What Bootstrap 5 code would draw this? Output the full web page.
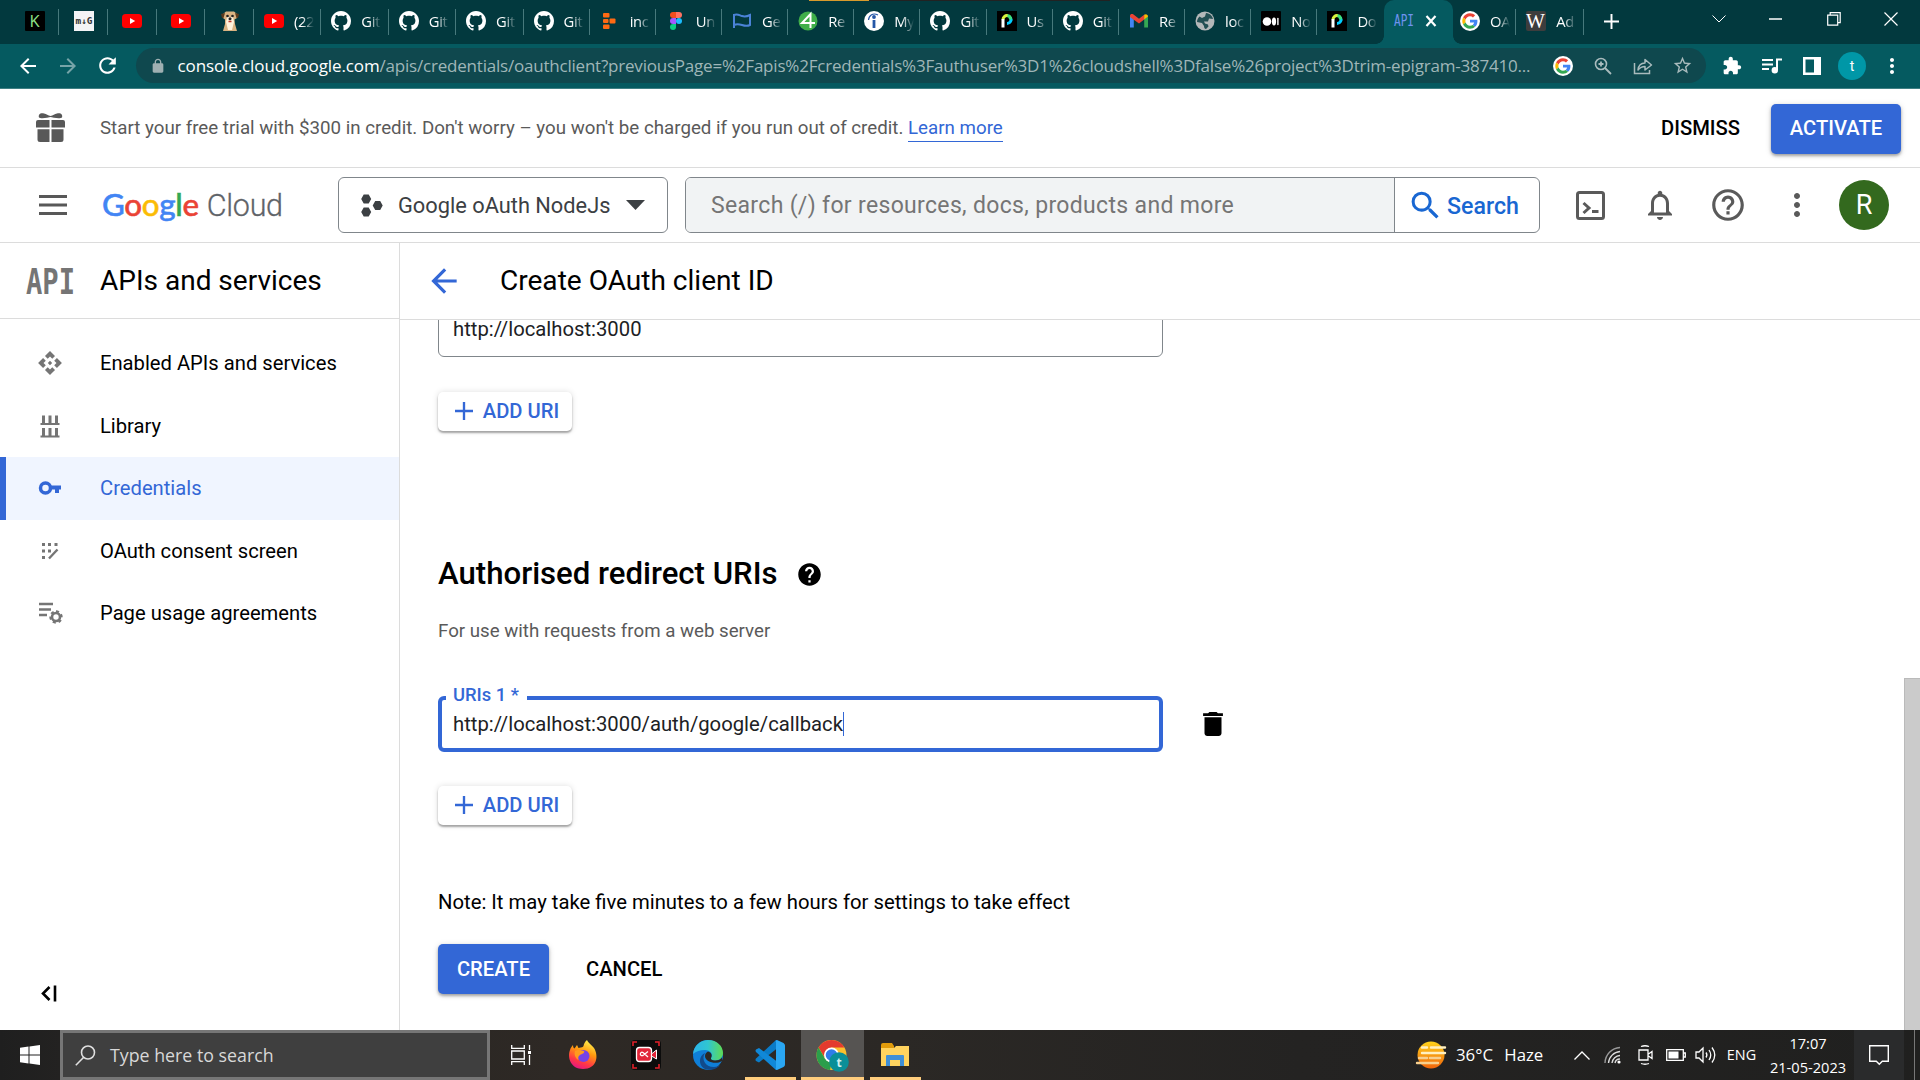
<!DOCTYPE html>
<html lang="en">
<head>
<meta charset="utf-8">
<title>Create OAuth client ID</title>
<link href="https://cdn.jsdelivr.net/npm/bootstrap@5.3.0/dist/css/bootstrap.min.css" rel="stylesheet">
<style>
:root{--blue:#3367d6;--rule:#dcdcdc;--ui:"Open Sans","Noto Sans",sans-serif}
body{font-family:Roboto,sans-serif;width:1920px;height:1080px;overflow:hidden;color:#000;background:#fff;line-height:1;white-space:nowrap}
svg{flex:none;display:block;overflow:visible}
/* browser chrome */
.tabstrip{height:43.5px;background:#02393e;font-family:var(--ui);font-size:14.8px;color:#fff;padding-left:10.5px;position:relative}
.media-line{left:809px;top:0;width:301px;height:1px;background:linear-gradient(90deg,#d89b2c 60px,#222 60px)}
.tb{height:43.5px;padding-bottom:1px;display:flex;align-items:center;position:relative;width:66.17px;padding-left:10px}
.tb::after{content:"";position:absolute;right:0;top:9px;width:1px;height:26px;background:#47797c}
.tb.pinned{width:48.7px;padding-left:14.5px}
.tb.wide{width:67.4px}
.tb.active-tab{background:#055a60;border-radius:10px 10px 0 0;width:69px;margin-right:-2.5px;padding-left:9px}
.tb.active-tab::after,.tb.nosep::after{display:none}
.foot{position:absolute;bottom:0;width:8px;height:8px}
.foot.l{left:-8px;background:radial-gradient(circle at 0 0,transparent 7.5px,#055a60 8px)}
.foot.r{right:-8px;background:radial-gradient(circle at 100% 0,transparent 7.5px,#055a60 8px)}
.tt{width:20px;overflow:hidden;margin-left:10px;letter-spacing:-.3px;line-height:22px;margin-top:-1px;-webkit-mask-image:linear-gradient(90deg,#000 8px,transparent 20px);mask-image:linear-gradient(90deg,#000 8px,transparent 20px)}
.winbtn{width:57.5px;height:37px}
.addr{height:45.5px;background:#055a60;border-bottom:1px solid #3f8084;padding:0 8px 0 7.5px;color:#fff}
.slot40{width:40px}
.omni{height:35px;border-radius:18px;background:#0f484e;width:1570px;padding:0 3px 0 14px;font-family:var(--ui);font-size:17px;color:#fff}
.omni .dom{letter-spacing:-.11px}
.omni .path{letter-spacing:-.21px;color:#9fb6b8}
.prof{width:28px;height:28px;border-radius:50%;background:#0097a7;font-size:14px}
/* trial banner */
.trial{height:79px;border-bottom:1px solid var(--rule);padding:1px 19px 0 36px;color:#5a5a5a;font-size:18.73px}
.trial a{color:var(--blue);text-decoration:none;border-bottom:1px solid var(--blue);padding-bottom:2px}
.gbtn{border:0;border-radius:5px;font-weight:500;font-size:20.2px;line-height:1;color:#000;background:none;padding:0;display:flex;align-items:center;justify-content:center}
.gbtn.fill{background:var(--blue);color:#fff;height:50px;box-shadow:0 2px 3px rgba(0,0,0,.3),0 1px 6px rgba(0,0,0,.15)}
.gbtn.raised{color:var(--blue);background:#fff;width:134px;height:38.5px;padding-left:4px;box-shadow:0 2px 2px rgba(0,0,0,.32),0 0 6px rgba(0,0,0,.13)}
/* console header */
.gbar{height:75px;border-bottom:1px solid var(--rule);padding:0 31px 0 39px;color:#5a5a5a}
.logo{font-size:31.3px;width:183px;letter-spacing:-.3px;margin-left:31px}
.logo .gg{font-family:Lato,sans-serif;font-weight:500;-webkit-text-stroke:.5px}
.logo .cl{font-family:Roboto,sans-serif;font-size:30.5px;color:#5f6368;font-weight:300;-webkit-text-stroke:.3px}
.proj{width:330px;height:56px;border:1px solid #80868b;border-radius:6px;color:#3c4043;font-size:21.8px;padding-left:22px}
.searchbox{width:855px;height:56px;border:1px solid #80868b;border-radius:6px;overflow:hidden}
.searchbox .ph{background:#f1f3f4;width:709px;border-right:1px solid #80868b;font-size:23px;letter-spacing:.33px;color:#757575;padding:1px 0 0 25px}
.searchbox .go{color:#1967d2;font-weight:500;font-size:23.2px;padding-left:12px}
.slot68{width:68.6px}
.userpic{width:50px;height:50px;border-radius:50%;background:#33691e;color:#fff;font-size:27px}
/* side navigation */
.side{width:400px;border-right:1px solid var(--rule)}
.side-head{height:76px;border-bottom:1px solid var(--rule);font-size:28px;padding-left:25px}
.api-mark{font-family:"DejaVu Sans Mono","Liberation Mono",monospace;font-weight:700;width:75px}
.api-mark text{font-size:35px}
.side-nav{padding-top:13px}
.item{height:62.5px;font-size:20.2px;padding-left:37px;color:#000}
.item svg{color:#757575;margin-right:37px}
.item.on{background:#f0f5ff;color:var(--blue);border-left:6px solid var(--blue);padding-left:31px}
.item.on svg{color:var(--blue)}
/* main column */
.main-head{height:77px;border-bottom:1px solid var(--rule);font-size:28.05px;padding-left:25px}
.scroller{overflow:hidden;padding-left:38px}
.uri{width:725px;height:56px;border:1px solid #80868b;border-radius:6px;font-size:20.27px;color:#202124;padding-left:14px;position:relative}
.uri.first{margin-top:-19px}
.uri.focus{border:4px solid var(--blue);padding-left:11px}
.uri label{position:absolute;left:4px;top:-15px;width:81px;padding-left:7px;background:#fff;color:var(--blue);font-weight:500;font-size:18.4px;line-height:20px}
.caret{width:1px;height:24px;background:var(--blue)}
.thumb{right:0;top:678px;width:16px;height:352px;background:#cbcbcb;border:1px solid #bababa;border-width:1px 0 0 1px}
/* taskbar */
.taskbar{height:50px;background:linear-gradient(90deg,#1f1f1f 0,#232221 60px,#2e2925 560px,#2b2825 900px,#242322 1300px,#20201f 1920px);color:#fff;font-family:var(--ui)}
.start{width:60px}
.tsearch{width:430px;height:50px;border:3px solid #767676;background:#3f3f3f;font-size:17.8px;color:#d8d8d8;padding:1px 0 0 12px}
.app{width:62.3px;height:50px;position:relative}
.app.run::after{content:"";position:absolute;bottom:0;left:6px;width:51px;height:3px;background:#ffcd7d}
.app.cur{background:#565452}
.app.cur::after{left:0;width:100%}
.clock{width:92px;font-size:14.6px;line-height:24px}
.notif{width:50px;height:50px;background:#2a2b2c}
.peek{width:16px;height:50px;padding-right:5px}
.peek i{width:1px;height:50px;background:#777}
.w30{width:30px}
</style>
<script src="https://cdn.jsdelivr.net/npm/bootstrap@5.3.0/dist/js/bootstrap.bundle.min.js"></script>
</head>
<body class="d-flex flex-column">
<svg width="0" height="0" class="position-absolute">
<symbol id="gh" viewBox="0 0 16 16"><path fill="#fff" d="M8 0C3.58 0 0 3.58 0 8c0 3.54 2.29 6.53 5.47 7.59.4.07.55-.17.55-.38 0-.19-.01-.82-.01-1.49-2.01.37-2.53-.49-2.69-.94-.09-.23-.48-.94-.82-1.13-.28-.15-.68-.52-.01-.53.63-.01 1.08.58 1.23.82.72 1.21 1.87.87 2.33.66.07-.52.28-.87.51-1.07-1.78-.2-3.64-.89-3.64-3.95 0-.87.31-1.59.82-2.15-.08-.2-.36-1.02.08-2.12 0 0 .67-.21 2.2.82.64-.18 1.32-.27 2-.27s1.36.09 2 .27c1.53-1.04 2.2-.82 2.2-.82.44 1.1.16 1.92.08 2.12.51.56.82 1.27.82 2.15 0 3.07-1.87 3.75-3.65 3.95.29.25.54.73.54 1.48 0 1.07-.01 1.93-.01 2.2 0 .21.15.46.55.38A8.01 8.01 0 0 0 16 8c0-4.42-3.58-8-8-8z"/></symbol>
<symbol id="yt" viewBox="0 0 20 20"><rect y="3" width="20" height="14" rx="3.5" fill="red"/><path fill="#fff" d="M8 7l5.2 3L8 13z"/></symbol>
<symbol id="gg" viewBox="-7 -7 62 62"><circle cx="24" cy="24" r="31" fill="#fff"/><path fill="#ea4335" d="M24 9.5c3.54 0 6.71 1.22 9.21 3.6l6.85-6.85C35.9 2.38 30.47 0 24 0 14.62 0 6.51 5.38 2.56 13.22l7.98 6.19C12.43 13.72 17.74 9.5 24 9.5z"/><path fill="#4285f4" d="M46.98 24.55c0-1.57-.15-3.09-.38-4.55H24v9.02h12.94c-.58 2.96-2.26 5.48-4.78 7.18l7.73 6c4.51-4.18 7.09-10.36 7.09-17.65z"/><path fill="#fbbc05" d="M10.53 28.59c-.48-1.45-.76-2.99-.76-4.59s.27-3.14.76-4.59l-7.98-6.19C.92 16.46 0 20.12 0 24c0 3.88.92 7.54 2.56 10.78l7.97-6.19z"/><path fill="#34a853" d="M24 48c6.48 0 11.93-2.13 15.89-5.81l-7.73-6c-2.15 1.45-4.92 2.3-8.16 2.3-6.26 0-11.57-4.22-13.47-9.91l-7.98 6.19C6.51 42.62 14.62 48 24 48z"/></symbol>
<symbol id="pp" viewBox="0 0 20 20"><rect width="20" height="20" fill="#000"/><path fill="none" stroke="#0cf" stroke-width="3" d="M10 12.5a4 4 0 0 0 3.5-6"/><path fill="none" stroke="#3fe07a" stroke-width="3" d="M13.6 8.5A4 4 0 0 0 10 4.6"/><path fill="none" stroke="#d8f23c" stroke-width="3" d="M10.5 4.6A4 4 0 0 0 6 8.5"/><path fill="none" stroke="#fff" stroke-width="3" d="M6 8v8.5"/></symbol>
<symbol id="plus" viewBox="0 0 20 20"><path stroke="currentColor" stroke-width="2.6" d="M10 0v20M0 10h20"/></symbol>
<symbol id="back" viewBox="0 0 24 24"><path fill="currentColor" d="M20 11H7.83l5.59-5.59L12 4l-8 8 8 8 1.41-1.41L7.83 13H20v-2z"/></symbol>
<symbol id="dots" viewBox="0 0 24 24"><path fill="currentColor" d="M12 8c1.1 0 2-.9 2-2s-.9-2-2-2-2 .9-2 2 .9 2 2 2zm0 2c-1.1 0-2 .9-2 2s.9 2 2 2 2-.9 2-2-.9-2-2-2zm0 6c-1.1 0-2 .9-2 2s.9 2 2 2 2-.9 2-2-.9-2-2-2z"/></symbol>
</svg>

<header>
<div class="tabstrip d-flex">
  <div class="media-line position-absolute"></div>
  <div class="tb pinned"><svg width="20" height="20"><rect width="20" height="20" rx="1" fill="#000"/><text x="4.5" y="16" font-size="16.5" fill="#8fe388" font-family="Open Sans">K</text></svg></div>
  <div class="tb pinned"><svg width="20" height="20"><rect width="20" height="20" fill="#f4f4f6"/><text x="1.5" y="13" font-size="8.5" font-weight="700" fill="#333" font-family="DejaVu Sans Mono" textLength="17" lengthAdjust="spacingAndGlyphs">m↓G</text></svg></div>
  <div class="tb pinned"><svg width="20" height="20"><use href="#yt"/></svg></div>
  <div class="tb pinned"><svg width="20" height="20"><use href="#yt"/></svg></div>
  <div class="tb pinned"><svg width="20" height="20"><path fill="#d9b382" d="M3 3l3-2.500h8L17 3v4l-2.500 1.500L15 13l2 7H3l2-7V8.500L3 7z"/><path fill="#5b3a1c" d="M1 3l4-1-1.500 5L2 7zM19 3l-4-1 1.500 5L18 7z"/><path fill="#fff3dc" d="M7 6h6l1 5-2 8H8l-2-8z"/><circle cx="7.500" cy="5" r="1.300" fill="#222"/><circle cx="12.500" cy="5" r="1.300" fill="#222"/><circle cx="10" cy="7.800" r="1.500" fill="#222"/><path stroke="#c0392b" stroke-width="1.500" d="M8.500 10.500h3"/></svg></div>
  <div class="tb wide"><svg width="20" height="20"><use href="#yt"/></svg><div class="tt">(22</div></div>
  <div class="tb wide"><svg width="20" height="20"><use href="#gh"/></svg><div class="tt">Git</div></div>
  <div class="tb wide"><svg width="20" height="20"><use href="#gh"/></svg><div class="tt">Git</div></div>
  <div class="tb wide"><svg width="20" height="20"><use href="#gh"/></svg><div class="tt">Git</div></div>
  <div class="tb"><svg width="20" height="20"><use href="#gh"/></svg><div class="tt">Git</div></div>
  <div class="tb"><svg width="20" height="20"><g fill="#ff6a13"><rect x="3" y="2" width="6.500" height="4.500" rx="1"/><rect x="9.500" y="7.500" width="6" height="5" rx="1"/><rect x="3" y="8" width="5.500" height="4" rx="1"/><rect x="3" y="13.500" width="6.500" height="4.500" rx="1"/></g></svg><div class="tt">inc</div></div>
  <div class="tb"><svg width="20" height="20"><path fill="#f24e1e" d="M10 1H7a3 3 0 0 0 0 6h3z"/><path fill="#ff7262" d="M10 1h3a3 3 0 0 1 0 6h-3z"/><path fill="#a259ff" d="M10 7H7a3 3 0 0 0 0 6h3z"/><circle cx="13" cy="10" r="3" fill="#1abcfe"/><path fill="#0acf83" d="M10 13H7a3 3 0 1 0 3 3z"/></svg><div class="tt">Un</div></div>
  <div class="tb"><svg width="20" height="20"><path fill="none" stroke="#4b83d8" stroke-width="2" d="M2 17V3M2 4c3-1.500 5 0 8 1s5 .5 8-1v10c-3 1.500-5 1-8 0s-5-1.500-8 0"/></svg><div class="tt">Ge</div></div>
  <div class="tb"><svg width="20" height="20"><circle cx="10" cy="10" r="9.500" fill="#3fae49"/><path fill="none" stroke="#fff" stroke-width="2" d="M12.500 17V3L4 12h13"/></svg><div class="tt">Re</div></div>
  <div class="tb"><svg width="20" height="20"><circle cx="10" cy="10" r="10" fill="#fff"/><circle cx="10" cy="6" r="1.900" fill="#2557a7"/><path stroke="#2557a7" stroke-width="2.800" d="M10 9v8"/><path fill="none" stroke="#2557a7" stroke-width="1.200" d="M4.500 9C5 4 9 1.500 14 4"/></svg><div class="tt">My</div></div>
  <div class="tb"><svg width="20" height="20"><use href="#gh"/></svg><div class="tt">Git</div></div>
  <div class="tb"><svg width="20" height="20"><use href="#pp"/></svg><div class="tt">Us</div></div>
  <div class="tb"><svg width="20" height="20"><use href="#gh"/></svg><div class="tt">Git</div></div>
  <div class="tb"><svg width="20" height="20"><path fill="#4285f4" d="M1 5v11.500h3.800V8z"/><path fill="#34a853" d="M19 5v11.500h-3.800V8z"/><path fill="#ea4335" d="M1 5c0-2 2-2.500 3.500-1.500L10 7.800l5.500-4.300v4.800L10 12.500 1 6z"/><path fill="#fbbc04" d="M15.200 3.700C17 2.500 19 3.500 19 5.500l-3.800 3z"/></svg><div class="tt">Re</div></div>
  <div class="tb"><svg width="20" height="20"><circle cx="10" cy="10" r="9.500" fill="#b4b8b9"/><path fill="#234f53" d="M11 2c4 .5 6.500 3 7 6l-4-.5-1 3H9l1 2 3 1 .5 2L11 18c-1.500 0-2-1.500-2-3l-2-3-5-1c0-2 1-4 2.500-5.500L7 7l3-1.500z"/></svg><div class="tt">loc</div></div>
  <div class="tb"><svg width="20" height="20"><rect width="20" height="20" rx="1" fill="#000"/><circle cx="6" cy="10.500" r="4.300" fill="#fff"/><ellipse cx="13" cy="10.500" rx="2.100" ry="4" fill="#fff"/><rect x="16.200" y="6.800" width="1.400" height="7.400" rx=".7" fill="#fff"/></svg><div class="tt">No</div></div>
  <div class="tb nosep"><svg width="20" height="20"><use href="#pp"/></svg><div class="tt">Do</div></div>
  <div class="tb active-tab"><i class="foot l"></i><i class="foot r"></i><svg width="22" height="20"><text x="1" y="15" textLength="20" lengthAdjust="spacingAndGlyphs" font-family="DejaVu Sans Mono" font-size="15" fill="#6f93f0">API</text></svg><svg style="margin-left:6px" width="20" height="20"><path stroke="#fff" stroke-width="2.200" d="M5.500 5l9 10M14.500 5l-9 10"/></svg></div>
  <div class="tb"><svg width="20" height="20"><use href="#gg"/></svg><div class="tt">OA</div></div>
  <div class="tb wide"><svg width="20" height="20"><rect width="20" height="20" rx="2" fill="#3d3d3d"/><text x="0" y="16.500" font-family="Liberation Serif" font-size="20" fill="#fff" textLength="20">W</text></svg><div class="tt">Ad</div></div>
  <div class="ms-3 d-flex align-items-center ps-1"><svg width="15" height="15" color="#fff"><use href="#plus"/></svg></div>
  <div class="d-flex ms-auto">
    <div class="winbtn d-flex align-items-center justify-content-center"><svg width="14" height="8"><path fill="none" stroke="#fff" d="M.5.5l6.500 6.500L13.500.5"/></svg></div>
    <div class="winbtn d-flex align-items-center justify-content-center"><svg width="14" height="2"><path stroke="#fff" stroke-width="1.500" d="M0 1h13"/></svg></div>
    <div class="winbtn d-flex align-items-center justify-content-center"><svg width="14" height="14"><path fill="none" stroke="#fff" stroke-width="1.200" d="M.7 3.200h10v10H.7zM3.200 3V.7h10v10H11"/></svg></div>
    <div class="winbtn d-flex align-items-center justify-content-center"><svg width="14" height="14"><path stroke="#fff" stroke-width="1.200" d="M.5.5l13 13M13.500.5l-13 13"/></svg></div>
  </div>
</div>
<div class="addr d-flex align-items-center">
  <div class="slot40 d-flex justify-content-center"><svg width="24" height="24"><use href="#back"/></svg></div>
  <div class="slot40 d-flex justify-content-center" style="opacity:.45"><svg width="24" height="24" transform="scale(-1 1)"><use href="#back"/></svg></div>
  <div class="slot40 d-flex justify-content-center"><svg width="25" height="25" viewBox="0 0 24 24"><path fill="#fff" d="M17.650 6.350C16.200 4.900 14.210 4 12 4c-4.420 0-7.990 3.580-7.990 8s3.570 8 7.990 8c3.730 0 6.840-2.550 7.730-6h-2.080c-.82 2.330-3.040 4-5.650 4-3.310 0-6-2.690-6-6s2.690-6 6-6c1.660 0 3.140.69 4.220 1.780L13 11h7V4l-2.350 2.350z"/></svg></div>
  <div class="omni d-flex align-items-center ms-2">
    <svg width="16" height="16" viewBox="0 0 24 24"><path fill="#9fb0b2" d="M18 8h-1V6c0-2.760-2.240-5-5-5S7 3.240 7 6v2H6c-1.100 0-2 .9-2 2v10c0 1.100.9 2 2 2h12c1.100 0 2-.9 2-2V10c0-1.100-.9-2-2-2zM9 6c0-1.660 1.340-3 3-3s3 1.340 3 3v2H9V6z"/></svg>
    <div class="ms-2 ps-1"><span class="dom">console.cloud.google.com</span><span class="path">/apis/credentials/oauthclient?previousPage=%2Fapis%2Fcredentials%3Fauthuser%3D1%26cloudshell%3Dfalse%26project%3Dtrim-epigram-387410...</span></div>
    <div class="d-flex ms-auto align-items-center">
      <div class="slot40 d-flex justify-content-center"><svg width="20" height="20"><use href="#gg"/></svg></div>
      <div class="slot40 d-flex justify-content-center"><svg width="18" height="18" fill="none" stroke="#a9bbbd" stroke-width="1.600"><circle cx="7" cy="7" r="5.500"/><path d="M11 11l6 6M4.500 7h5M7 4.500v5" stroke-width="1.800"/></svg></div>
      <div class="slot40 d-flex justify-content-center"><svg width="20" height="20" fill="none" stroke="#a9bbbd" stroke-width="1.500"><path d="M1.500 7v10.500h15V14"/><path d="M5 14c.5-4.500 3-7 7-7V3.500L18.500 9 12 14v-3.500c-3 0-5 1-7 3.500z" stroke-linejoin="round"/></svg></div>
      <div class="slot40 d-flex justify-content-center"><svg width="21" height="21" viewBox="0 0 24 24"><path fill="#a9bbbd" d="M22 9.240l-7.190-.62L12 2 9.190 8.630 2 9.240l5.460 4.730L5.820 21 12 17.270 18.180 21l-1.630-7.030L22 9.240zM12 15.400l-3.760 2.270 1-4.280-3.320-2.880 4.380-.38L12 6.100l1.710 4.040 4.380.38-3.320 2.880 1 4.280L12 15.400z"/></svg></div>
    </div>
  </div>
  <div class="d-flex ms-auto align-items-center">
    <div class="slot40 d-flex justify-content-center"><svg width="20" height="20" viewBox="0 0 24 24"><path fill="#fff" d="M20.500 11H19V7c0-1.100-.9-2-2-2h-4V3.500C13 2.120 11.880 1 10.500 1S8 2.120 8 3.500V5H4c-1.100 0-1.990.9-1.990 2v3.800H3.500c1.490 0 2.700 1.210 2.700 2.700s-1.210 2.700-2.700 2.700H2V20c0 1.100.9 2 2 2h3.800v-1.500c0-1.490 1.210-2.700 2.700-2.700 1.490 0 2.700 1.210 2.700 2.700V22H17c1.100 0 2-.9 2-2v-4h1.500c1.380 0 2.500-1.120 2.500-2.500S21.880 11 20.500 11z"/></svg></div>
    <div class="slot40 d-flex justify-content-center"><svg width="20" height="18" stroke="#fff" stroke-width="2" fill="none"><path d="M0 3h11M0 7.500h11M0 12h7M15 13V2.500h5"/><circle cx="12.800" cy="13.200" r="2.200" fill="#fff"/></svg></div>
    <div class="slot40 d-flex justify-content-center"><svg width="18" height="18"><path fill="#fff" fill-rule="evenodd" d="M0 0h18v18H0zM2.500 2.500v13h8.500v-13z"/></svg></div>
    <div class="slot40 d-flex justify-content-center"><div class="prof d-flex align-items-center justify-content-center">t</div></div>
    <div class="slot40 d-flex justify-content-center"><svg width="24" height="26"><use href="#dots"/></svg></div>
  </div>
</div>
</header>

<section class="trial d-flex align-items-center">
  <svg width="29" height="30" style="margin-top:-3px" fill="#585858"><path d="M3 5.500C2 3 4 .5 8 1.500c2.500.6 4 1.800 6.500 2.500 2.500-.7 4-1.900 6.500-2.500 4-1 6 1.500 5 4-1 1-5 .8-8 .3l-3.500-.9-3.500.9c-3 .5-7 .7-8-.3z"/><path d="M2 8h11.500v7.500H0V10q0-2 2-2zM15.500 8H27q2 0 2 2v5.500H15.500zM1.500 17.300h12V30H4q-2.500 0-2.500-2.500zM15.500 17.300h12v10.200q0 2.500-2.500 2.500h-9.500z"/></svg>
  <div style="margin-left:35px"><span>Start your free trial with $300 in credit. Don't worry – you won't be charged if you run out of credit.</span> <a href="#">Learn more</a></div>
  <div class="d-flex ms-auto align-items-center">
    <button class="gbtn" style="margin-right:31px">DISMISS</button>
    <button class="gbtn fill" style="width:130px">ACTIVATE</button>
  </div>
</section>

<nav class="gbar d-flex align-items-center">
  <svg width="28" height="20"><path stroke="#585858" stroke-width="3" d="M0 1.500h28M0 10h28M0 18.500h28"/></svg>
  <div class="logo d-flex align-items-baseline"><span class="gg ps-1"><span style="color:#4285f4">G</span><span style="color:#ea4335">o</span><span style="color:#fbbc04">o</span><span style="color:#4285f4">g</span><span style="color:#34a853">l</span><span style="color:#ea4335">e</span></span><span class="cl ps-2">Cloud</span></div>
  <div class="proj d-flex align-items-center" style="margin-left:57px">
    <svg width="22" height="23" fill="#3c4043"><path d="M2.700.5h5L10.200 5 7.700 9.500h-5L.2 5zM2.700 13.500h5l2.500 4.500-2.500 4.500h-5L.2 18zM14.200 7h5l2.500 4.500-2.500 4.500h-5l-2.500-4.500z"/></svg>
    <span style="margin-left:15px;padding-top:1px">Google oAuth NodeJs</span>
    <svg class="ms-3" width="19" height="10"><path fill="#3c4043" d="M0 0h19l-9.500 10z"/></svg>
  </div>
  <div class="searchbox d-flex" style="margin-left:17px">
    <div class="ph d-flex align-items-center">Search (/) for resources, docs, products and more</div>
    <div class="go d-flex align-items-center"><svg width="37" height="37" viewBox="0 0 24 24"><path fill="currentColor" d="M15.500 14h-.79l-.28-.27A6.471 6.471 0 0 0 16 9.500 6.500 6.500 0 1 0 9.500 16c1.610 0 3.090-.59 4.230-1.570l.27.28v.79l5 4.990L20.490 19l-4.990-5zm-6 0C7.010 14 5 11.990 5 9.500S7.010 5 9.500 5 14 7.010 14 9.500 11.990 14 9.500 14z"/></svg><span style="margin-left:3px;padding-top:3px">Search</span></div>
  </div>
  <div class="d-flex align-items-center ms-auto">
    <div class="slot68 d-flex justify-content-center"><svg width="29" height="29" fill="none" stroke="#5a5a5a" stroke-width="3"><rect x="1.500" y="1.500" width="26" height="26" rx="2"/><path d="M7.500 12l5.500 5-5.500 5M16 20.500h6.500"/></svg></div>
    <div class="slot68 d-flex justify-content-center"><svg width="36" height="36" viewBox="0 0 24 24"><path fill="#5a5a5a" d="M12 22c1.100 0 2-.9 2-2h-4c0 1.100.9 2 2 2zm6-6v-5c0-3.070-1.630-5.640-4.500-6.320V4c0-.83-.67-1.500-1.500-1.500s-1.500.67-1.500 1.500v.68C7.640 5.360 6 7.920 6 11v5l-2 2v1h16v-1l-2-2zm-2 1H8v-6c0-2.480 1.510-4.500 4-4.500s4 2.020 4 4.500v6z"/></svg></div>
    <div class="slot68 d-flex justify-content-center"><svg width="38" height="38" viewBox="0 0 24 24"><path fill="#5a5a5a" d="M11 18h2v-2h-2v2zm1-16C6.480 2 2 6.480 2 12s4.480 10 10 10 10-4.480 10-10S17.520 2 12 2zm0 18c-4.410 0-8-3.590-8-8s3.590-8 8-8 8 3.590 8 8-3.590 8-8 8zm0-14c-2.210 0-4 1.790-4 4h2c0-1.100.9-2 2-2s2 .9 2 2c0 2-3 1.750-3 5h2c0-2.250 3-2.500 3-5 0-2.210-1.790-4-4-4z"/></svg></div>
    <div class="slot68 d-flex justify-content-center"><svg width="36" height="36"><use href="#dots"/></svg></div>
    <div class="userpic d-flex align-items-center justify-content-center ms-2">R</div>
  </div>
</nav>

<div class="d-flex flex-grow-1" style="min-height:0">
  <aside class="side d-flex flex-column flex-shrink-0">
    <div class="side-head d-flex align-items-center">
      <div class="api-mark"><svg width="50" height="28"><text x="1" y="27" textLength="49" lengthAdjust="spacingAndGlyphs" fill="#757575">API</text></svg></div>APIs and services
    </div>
    <div class="side-nav">
      <div class="item d-flex align-items-center"><svg width="26" height="26" viewBox="0 0 24 24"><path fill="currentColor" d="M14 12l-2 2-2-2 2-2 2 2zm-2-6l2.120 2.120 2.500-2.500L12 1 7.380 5.620l2.500 2.500L12 6zm-6 6l2.120-2.120-2.500-2.500L1 12l4.620 4.620 2.500-2.500L6 12zm12 0l-2.120 2.120 2.500 2.500L23 12l-4.620-4.620-2.500 2.500L18 12zm-6 6l-2.120-2.120-2.500 2.500L12 23l4.620-4.620-2.500-2.500L12 18z"/></svg>Enabled APIs and services</div>
      <div class="item d-flex align-items-center"><svg width="26" height="26" stroke="currentColor" fill="none"><path stroke-width="3" d="M6.500 2.500v8M13 2.500v8M19.500 2.500v8M6.500 15v8M13 15v8M19.500 15v8"/><path stroke-width="2" d="M3.500 11h19M3.500 23.500h19"/></svg>Library</div>
      <div class="item on d-flex align-items-center"><svg width="26" height="26" fill="none" stroke="currentColor"><circle cx="8.500" cy="13" r="5" stroke-width="3.500"/><path stroke-width="4" d="M13.500 12.500H24M20 13v5"/></svg>Credentials</div>
      <div class="item d-flex align-items-center"><svg width="26" height="26" fill="currentColor"><path d="M5 5h3v3H5zM11 5h3v3h-3zM17.500 5h3v3h-3zM5 11.500h3v3H5zM11 11.500h3v3h-3zM5 18h3v3H5z"/><path stroke="currentColor" stroke-width="2.400" d="M12 20.500l8.500-9"/></svg>OAuth consent screen</div>
      <div class="item d-flex align-items-center"><svg width="26" height="26" stroke="currentColor" fill="none"><path stroke-width="2.300" d="M2 4h14M2 9.500h12M2 15h8"/><circle cx="19" cy="17" r="4" stroke-width="2.600"/><path stroke-width="2.400" stroke-dasharray="3 2.760" d="M19 11.500a5.500 5.500 0 1 1-.01 0"/></svg>Page usage agreements</div>
    </div>
    <div class="mt-auto" style="padding:0 0 28px 41px"><svg width="17" height="17" fill="none" stroke="#000" stroke-width="2.600"><path d="M8.500 2L2 8.500 8.500 15M14 .5v16"/></svg></div>
  </aside>
  <main class="flex-grow-1 d-flex flex-column">
    <div class="main-head d-flex align-items-center"><svg width="38" height="38" color="#3367d6"><use href="#back"/></svg><span style="margin-left:37px">Create OAuth client ID</span></div>
    <div class="scroller flex-grow-1">
      <div class="uri first d-flex align-items-center">http://localhost:3000</div>
      <button class="gbtn raised" style="margin-top:35px"><svg width="18" height="18"><use href="#plus"/></svg><span style="margin-left:10px">ADD URI</span></button>
      <div class="d-flex align-items-center" style="margin-top:122.5px;height:42px"><span style="font-size:31.15px;font-weight:500">Authorised redirect URIs</span><svg style="margin-left:18.5px" width="27" height="27" viewBox="0 0 24 24"><path d="M12 2C6.480 2 2 6.480 2 12s4.480 10 10 10 10-4.480 10-10S17.520 2 12 2zm1 17h-2v-2h2v2zm2.070-7.750l-.9.920C13.450 12.900 13 13.500 13 15h-2v-.5c0-1.100.45-2.100 1.170-2.830l1.240-1.260c.37-.36.59-.86.59-1.410 0-1.100-.9-2-2-2s-2 .9-2 2H8c0-2.210 1.790-4 4-4s4 1.790 4 4c0 .88-.36 1.680-.93 2.250z"/></svg></div>
      <div style="margin-top:26px;height:20px;line-height:20px;font-size:18.7px;color:#5a5a5a">For use with requests from a web server</div>
      <div class="d-flex align-items-center" style="margin-top:55px">
        <div class="uri focus d-flex align-items-center"><label>URIs 1 *</label>http://localhost:3000/auth/google/callback<div class="caret"></div></div>
        <svg style="margin-left:33px" width="34" height="32" viewBox="0 0 24 24" preserveAspectRatio="none"><path d="M6 19c0 1.100.9 2 2 2h8c1.100 0 2-.9 2-2V7H6v12zM19 4h-3.500l-1-1h-5l-1 1H5v2h14V4z"/></svg>
      </div>
      <button class="gbtn raised" style="margin-top:34px"><svg width="18" height="18"><use href="#plus"/></svg><span style="margin-left:10px">ADD URI</span></button>
      <div style="margin-top:66px;height:22px;line-height:22px;font-size:20.27px">Note: It may take five minutes to a few hours for settings to take effect</div>
      <div class="d-flex align-items-center" style="margin-top:31.5px">
        <button class="gbtn fill" style="width:111px">CREATE</button>
        <button class="gbtn" style="margin-left:37px">CANCEL</button>
      </div>
    </div>
  </main>
</div>
<div class="thumb position-absolute"></div>

<footer class="taskbar d-flex align-items-center flex-shrink-0">
  <div class="start d-flex justify-content-center"><svg width="20" height="20" fill="#fff"><path d="M0 2.800l8.500-1.200v8H0zM9.500 1.400L20 0v9.500H9.500zM0 10.500h8.500v8L0 17.300zM9.500 10.500H20V20L9.500 18.600z"/></svg></div>
  <div class="tsearch d-flex align-items-center"><svg width="21" height="21" fill="none" stroke="#e0e0e0" stroke-width="1.600"><circle cx="13" cy="7.500" r="6.500"/><path d="M8.500 12.500L.8 20.200"/></svg><span style="margin-left:14px">Type here to search</span></div>
  <div class="app d-flex align-items-center justify-content-center"><svg width="20" height="20" fill="none" stroke="#fff" stroke-width="1.300"><path d="M.7 0v3.300h12.600V0M.7 6h12.600v8H.7zM.7 20v-3.300h12.600V20M18.500 0v5M18.500 10v10"/><path fill="#fff" stroke="none" d="M17 6h3v3h-3z"/></svg></div>
  <div class="app d-flex align-items-center justify-content-center"><svg width="30" height="30" viewBox="0 0 30 30"><defs><linearGradient id="ff" x1=".7" y1="0" x2=".3" y2="1"><stop offset="0" stop-color="#fff44f"/><stop offset=".4" stop-color="#ff980e"/><stop offset=".75" stop-color="#ff3647"/><stop offset="1" stop-color="#e31587"/></linearGradient></defs><path fill="url(#ff)" d="M19 0c1 3 5 5 7 8 5 8 3 21-11 21C3 29-1 18 2 10c.5-2 2-4 3-5 0 2 .5 3 1.500 3.500L9 5l1.500 3C14 7.500 15 7 15.500 6 16 3.500 17 1.500 19 0z"/><circle cx="15.500" cy="16" r="6" fill="#7542e5"/><path fill="#ff9a1e" d="M7 11c4-2 6 0 9 0 1 2-2 3-4 4-2 1-2 3-1.500 5C7 18 6 14 7 11z"/></svg></div>
  <div class="app d-flex align-items-center justify-content-center"><svg width="30" height="30"><rect width="30" height="30" rx="4" fill="#0c0c0c"/><path fill="none" stroke="#e0202a" stroke-width="1.600" d="M2 6V2h4M24 2h4v4M28 24v4h-4M6 28H2v-4"/><rect x="5.500" y="7.500" width="15" height="14" rx="3" fill="#e2263a" stroke="#fff" stroke-width="1.300"/><path fill="#e2263a" stroke="#fff" d="M20.500 14l5-4v9l-5-3z"/><path fill="none" stroke="#fff" stroke-width="1.300" d="M17 17l-5-4.500c-3-1.500-4 4 0 3l5-4"/></svg></div>
  <div class="app d-flex align-items-center justify-content-center"><svg width="30" height="30"><defs><linearGradient id="e1" x1="0" x2="1"><stop offset="0" stop-color="#2bb3ea"/><stop offset=".5" stop-color="#30c6d0"/><stop offset="1" stop-color="#5fdc52"/></linearGradient></defs><circle cx="15" cy="15" r="15" fill="#0f7fd8"/><path fill="#114a8b" d="M12 13c-4 6 0 14 9 14 3 0 5-1 6.500-2.500C24 30 16 31 11 28.500c-6-4-5-13 1-15.500z"/><path fill="url(#e1)" d="M0 14C1 5 8 0 15 0c9 0 15 6 15 13 0 5-4 7.500-8 7.500-3 0-5-1-4-2.500 3-4-1-8-6-8-5 .2-9 1-12 4z"/><path fill="#2b2825" d="M29 21c-6 4-17 1-17-5 0-2 1.500-4 3-4.500 3.500 1 4.500 4 3 6.500-.5 1.500 1 2.500 4 2.500 3 0 5-.6 7-3z"/></svg></div>
  <div class="app run d-flex align-items-center justify-content-center"><svg width="30" height="30"><path fill="#0a7bc7" d="M22 0v8.500L4 22.500l-3-1.500q-1-1.500 0-2.500L21 0z"/><path fill="#1088d8" d="M22 30v-8.500L4 8 1 9.500q-1 1.300 0 2.500l20 18z"/><path fill="#2aa7f3" d="M22 0l6.500 3q1.500 1 1.500 2.500v19q0 1.500-1.500 2.500L22 30l-1.500-1 .5-1V2l-.5-1z"/></svg></div>
  <div class="app run cur d-flex align-items-center justify-content-center"><svg width="33" height="33"><circle cx="15.500" cy="16" r="15" fill="#fbc02d"/><path fill="#e33b2e" d="M2.500 8.500a15 15 0 0 1 26 0H15.500L9 19z"/><path fill="#2b9e4b" d="M2.500 8.500l6.500 11 6.500 4L14 31A15 15 0 0 1 2.500 8.500z"/><circle cx="15.500" cy="16" r="7.500" fill="#fff"/><circle cx="15.500" cy="16" r="5.800" fill="#2f7de9"/><circle cx="23" cy="23" r="9.800" fill="#0a8f98"/><text x="20.500" y="27.500" font-family="Open Sans" font-size="12" font-weight="700" fill="#cfeff0">t</text></svg></div>
  <div class="app run d-flex align-items-center justify-content-center"><svg width="28" height="24"><path fill="#e09b0b" d="M0 2q0-2 2-2h9l2 3v6H0z"/><path fill="#ffd35e" d="M0 5h13l2-2h13v20H0z"/><path fill="#3f8fd6" d="M5 13q0-1 1-1h16q1 0 1 1v10h-4v-6H9v6H5z"/></svg></div>

  <div class="d-flex align-items-center ms-auto">
    <svg width="30" height="28"><defs><linearGradient id="sun" x2="0" y2="1"><stop offset="0" stop-color="#ffd21a"/><stop offset="1" stop-color="#f0640a"/></linearGradient></defs><circle cx="15" cy="14" r="13.500" fill="url(#sun)"/><g stroke-width="2.400" stroke-linecap="round"><path stroke="#fff0c0" d="M6 6.500h5M15 6.500h14M6 12h23"/><path stroke="#f7cf8e" d="M3 17h8M14 17h10M1 22h21"/></g></svg>
    <span style="font-size:16.8px;margin-left:10px;width:111px;word-spacing:7px;padding-top:1px">36°C Haze</span>
    <div class="w30 d-flex justify-content-center"><svg width="16" height="9"><path fill="none" stroke="#fff" stroke-width="1.300" d="M.5 8.500L8 1l7.500 7.500"/></svg></div>
    <div class="w30 d-flex justify-content-center"><svg width="17" height="18" fill="none" stroke-width="1.400"><path stroke="#999" d="M1 17A16 16 0 0 1 16 1.500"/><path stroke="#ddd" d="M4.500 17A12.500 12.500 0 0 1 16 5.500M8 17a8.500 8.500 0 0 1 8-7.500M11 17a5 5 0 0 1 5-4"/><circle cx="15" cy="16" r="1.600" fill="#fff"/></svg></div>
    <div class="w30 d-flex justify-content-center ms-1"><svg width="16" height="20" fill="none" stroke="#fff" stroke-width="1.300"><path d="M1 5h9v10H1zM10.500 9l3.500-2.500v7L10.500 11M3 1.500q4-1.500 8 0M3 18.500q4 1.500 8 0"/></svg></div>
    <div class="w30 d-flex justify-content-center"><svg width="20" height="12"><path fill="none" stroke="#fff" stroke-width="1.300" d="M.7.7h16.600v10.600H.7zM17.500 4h1.800v4h-1.800"/><path fill="#fff" d="M2.500 2.500h10v7h-10z"/></svg></div>
    <div class="w30 d-flex justify-content-center"><svg width="22" height="18" fill="none" stroke="#fff" stroke-width="1.300"><path d="M1 6h3l4-4v14l-4-4H1zM11 6.500q1.800 2.500 0 5M14 4q3.500 5 0 10M17 1.500q5.500 7.500 0 15"/></svg></div>
    <div class="text-center" style="width:41px;font-size:14.4px;padding-top:1px">ENG</div>
    <div class="clock d-flex flex-column align-items-center">
      <span>17:07</span><span>21-05-2023</span></div>
    <div class="notif d-flex align-items-center justify-content-center"><svg width="20" height="20"><path fill="none" stroke="#fff" stroke-width="1.400" d="M.7.7h18.600v15.600h-6l-3 3-3-3H.7z"/></svg></div>
    <div class="peek d-flex justify-content-end"><i></i></div>
  </div>
</footer>
</body>
</html>
